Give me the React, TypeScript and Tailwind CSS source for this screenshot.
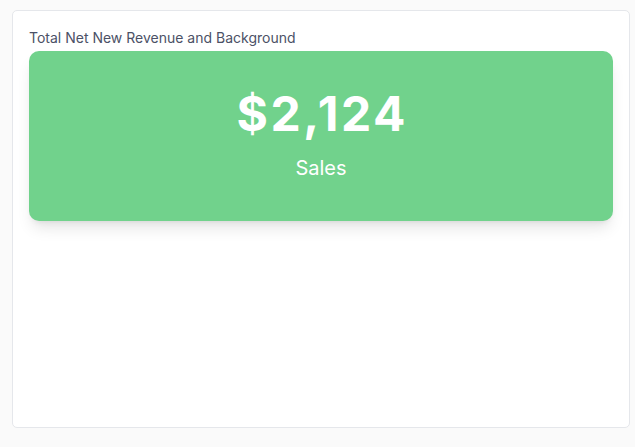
export default function App() {
  return (
    <div
      className="min-h-screen bg-[#fafafa] pl-3 pt-[10px]"
      style={{ fontFamily: "Inter, 'Liberation Sans', sans-serif" }}
    >
      {/* Widget card */}
      <div className="w-[618px] h-[418px] bg-white border border-[#e5e7eb] rounded-[5px] px-4 pt-[17px]">
        <h3 className="text-sm leading-5 text-[#4b5166] mb-[3px]">
          Total Net New Revenue and Background
        </h3>

        {/* KPI tile */}
        <div className="h-[170px] rounded-[10px] bg-[#71d28c] shadow-[0_10px_15px_-3px_rgba(0,0,0,0.1),0_4px_6px_-4px_rgba(0,0,0,0.1)] flex flex-col items-center justify-center gap-4 text-white">
          <div className="text-5xl leading-[48px] font-bold tracking-[2.6px] pl-[2.6px]">$2,124</div>
          <div className="text-xl leading-7">Sales</div>
        </div>
      </div>
    </div>
  );
}
